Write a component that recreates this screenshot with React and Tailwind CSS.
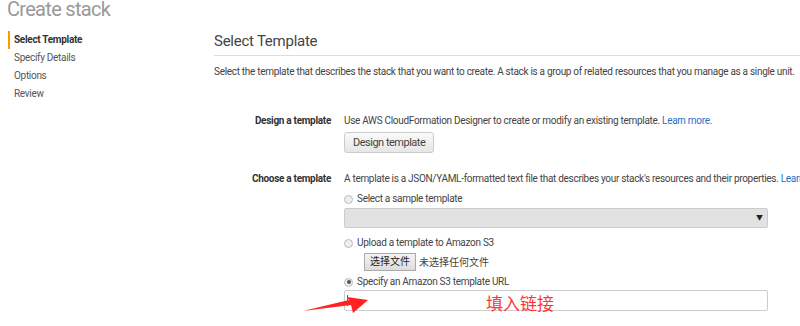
import React from 'react';

const font = { fontFamily: 'Roboto, "Noto Sans CJK SC", sans-serif' };

const steps = ['Select Template', 'Specify Details', 'Options', 'Review'];

const Radio = ({ checked, label }) => (
  <div className="flex items-center gap-[4px] h-[16px] leading-[16px]">
    <span className="flex items-center justify-center w-[9px] h-[9px] rounded-full border border-[#bbb] bg-[#eee]">
      {checked && <span className="w-[4px] h-[4px] rounded-full bg-[#555]" />}
    </span>
    <span className="text-[10px] tracking-[-0.3px] text-[#444]">{label}</span>
  </div>
);

const App = () => {
  return (
    <div className="relative w-[800px] h-[326px] overflow-hidden bg-white" style={font}>
      {/* Page title */}
      <div className="pl-[7px] mt-[-2px] text-[20px] leading-[22px] tracking-[-0.7px] text-[#999]">Create stack</div>

      <div className="flex">
        {/* Steps */}
        <div className="w-[214px] shrink-0 pl-[8px] mt-[11px]">
          {steps.map((s, i) => (
            <div
              key={s}
              className={
                i === 0
                  ? 'border-l-[2px] border-[#f90] pl-[4px] text-[10px] leading-[18px] tracking-[-0.3px] font-bold text-[#333]'
                  : 'pl-[6px] text-[10px] leading-[18px] tracking-[-0.3px] text-[#555]'
              }
            >
              {s}
            </div>
          ))}
        </div>

        {/* Main */}
        <div className="flex-1 mt-[11px] whitespace-nowrap">
          <div className="pb-[4px] border-b border-[#ddd] text-[15px] leading-[20px] tracking-[-0.25px] text-[#444]">Select Template</div>
          <div className="mt-[8px] text-[10px] leading-[16px] tracking-[-0.3px] text-[#444]">
            Select the template that describes the stack that you want to create. A stack is a group of related resources that you manage as a single unit.
          </div>

          {/* Design a template */}
          <div className="flex mt-[33px]">
            <div className="w-[117px] shrink-0 text-right text-[10px] leading-[16px] tracking-[-0.3px] font-bold text-[#333]">Design a template</div>
            <div className="ml-[13px]">
              <div className="text-[10px] leading-[16px] tracking-[-0.3px] text-[#444]">
                Use AWS CloudFormation Designer to create or modify an existing template.{' '}
                <span className="text-[#1f6fc5]">Learn more.</span>
              </div>
              <button className="mt-[3px] h-[21px] px-[8px] rounded-[3px] border border-[#ccc] bg-gradient-to-b from-[#fafafa] to-[#e6e6e6] text-[11px] leading-[19px] tracking-[-0.5px] text-[#444]">
                Design template
              </button>
            </div>
          </div>

          {/* Choose a template */}
          <div className="flex mt-[18px]">
            <div className="w-[117px] shrink-0 text-right text-[10px] leading-[16px] tracking-[-0.3px] font-bold text-[#333]">Choose a template</div>
            <div className="ml-[13px]">
              <div className="text-[10px] leading-[16px] tracking-[-0.3px] text-[#444]">
                A template is a JSON/YAML-formatted text file that describes your stack's resources and their properties.{' '}
                <span className="text-[#1f6fc5]">Learn more.</span>
              </div>

              <div className="mt-[4px]">
                <Radio label="Select a sample template" />
              </div>
              <div className="mt-[1px] w-[424px] h-[20px] rounded-[2px] border border-[#ccc] bg-[#e2e2e2] flex items-center justify-end pr-[4px]">
                <span className="text-[7px] leading-none text-[#222]">▼</span>
              </div>

              <div className="mt-[7px]">
                <Radio label="Upload a template to Amazon S3" />
              </div>
              <div className="mt-[2px] ml-[20px] flex items-center gap-[3px]">
                <button className="h-[18px] px-[5px] border border-[#aaa] bg-gradient-to-b from-[#f4f4f4] to-[#dcdcdc] text-[10px] leading-[16px] text-[#222]">
                  选择文件
                </button>
                <span className="text-[10px] text-[#444]">未选择任何文件</span>
              </div>

              <div className="mt-[3px]">
                <Radio checked label="Specify an Amazon S3 template URL" />
              </div>
              <div className="mt-0 w-[424px] h-[21px] rounded-[2px] border border-[#ccc] bg-white flex items-center pl-[2px]">
                <span className="w-px h-[11px] bg-[#666]" />
              </div>
            </div>
          </div>
        </div>
      </div>

      {/* Annotation */}
      <svg className="absolute left-0 top-0 pointer-events-none" width="800" height="326">
        <polygon points="303,311 349,300 347,297 368,300 353,313 351,305" fill="#f22" />
      </svg>
      <div className="absolute left-[486px] top-[292px] text-[17px] leading-[22px] text-[#f33]" style={{ fontFamily: '"Noto Sans CJK SC", sans-serif' }}>
        填入链接
      </div>
    </div>
  );
};

export default App;
